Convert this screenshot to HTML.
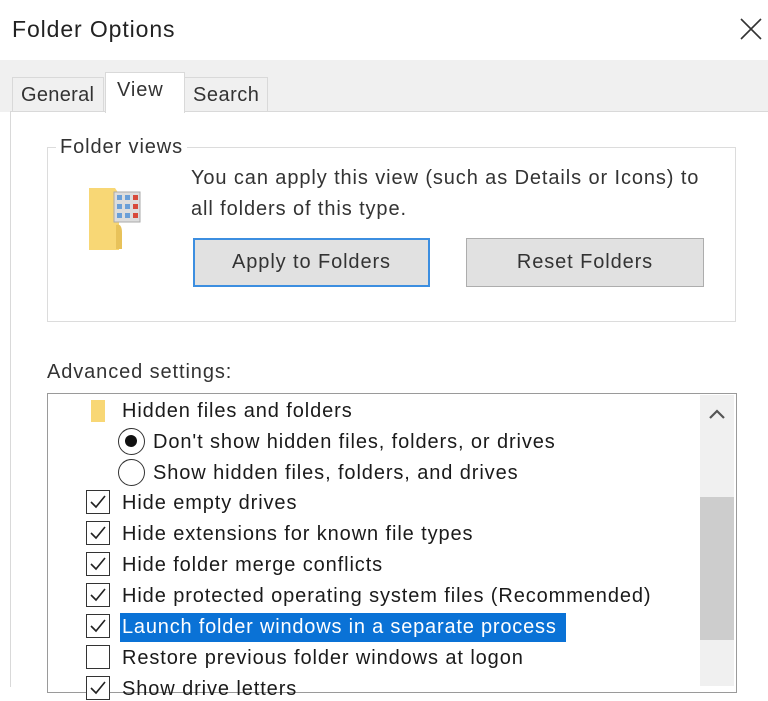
<!DOCTYPE html>
<html><head><style>
body{margin:0;width:768px;height:686px;overflow:hidden;background:#fff;font-family:"Liberation Sans",sans-serif;color:#1a1a1a;position:relative}
.a{position:absolute}
.t{font-size:20px;white-space:nowrap;letter-spacing:0.9px}
.cb{position:absolute;left:86px;width:22px;height:22px;border:1.5px solid #333;background:#fff}
.cb svg{position:absolute;left:2px;top:3px}
.rd{position:absolute;left:118px;width:27px;height:27px;border:1.5px solid #333;border-radius:50%;background:#fff;box-sizing:border-box}
</style></head><body>
<div class="a t" style="left:12px;top:16px;font-size:23px;color:#222">Folder Options</div>
<svg class="a" style="left:740px;top:18px" width="22" height="22"><path d="M1 1L21 21M21 1L1 21" stroke="#333" stroke-width="1.6"/></svg>
<div class="a" style="left:0;top:60px;width:768px;height:52px;background:#f0f0f0"></div>
<div class="a" style="left:10px;top:111px;width:758px;height:575px;background:#fff;border-top:1px solid #d9d9d9;border-left:1px solid #d9d9d9"></div>
<div class="a t" style="left:12px;top:77px;width:92px;height:34px;background:#f0f0f0;border:1px solid #d9d9d9;border-bottom:none;box-sizing:border-box;padding:6px 0 0 8px;color:#333;letter-spacing:0.3px">General</div>
<div class="a t" style="left:184px;top:77px;width:84px;height:34px;background:#f0f0f0;border:1px solid #d9d9d9;border-bottom:none;box-sizing:border-box;padding:6px 0 0 8px;color:#333;letter-spacing:0.5px">Search</div>
<div class="a t" style="left:105px;top:72px;width:80px;height:41px;background:#fff;border:1px solid #d9d9d9;border-bottom:none;box-sizing:border-box;padding:6px 0 0 11px;color:#333">View</div>
<div class="a" style="left:47px;top:147px;width:689px;height:175px;border:1px solid #dcdcdc;box-sizing:border-box"></div>
<div class="a t" style="left:56px;top:136px;background:#fff;padding:0 4px;color:#333">Folder views</div>
<svg class="a" style="left:86px;top:185px" width="60" height="66">
<path d="M3 3h26l4 6v56H3z" fill="#f8d775"/><path d="M30 40q6-2 6 8v16h-6z" fill="#e8c25a"/>
<rect x="28" y="7" width="26" height="30" fill="#ddd" stroke="#aaa"/>
<g fill="#6a9fd8"><rect x="31" y="10" width="5" height="5"/><rect x="39" y="10" width="5" height="5"/><rect x="31" y="19" width="5" height="5"/><rect x="39" y="19" width="5" height="5"/><rect x="31" y="28" width="5" height="5"/><rect x="39" y="28" width="5" height="5"/></g>
<g fill="#d84a3a"><rect x="47" y="10" width="5" height="5"/><rect x="47" y="19" width="5" height="5"/><rect x="47" y="28" width="5" height="5"/></g></svg>
<div class="a t" style="left:191px;top:163px;line-height:31px;color:#333">You can apply this view (such as Details or Icons) to<br>all folders of this type.</div>
<div class="a t" style="left:193px;top:238px;width:237px;height:49px;border:2px solid #3c8ee0;background:#e1e1e1;box-sizing:border-box;text-align:center;line-height:45px;color:#333">Apply to Folders</div>
<div class="a t" style="left:466px;top:238px;width:238px;height:49px;border:1px solid #adadad;background:#e1e1e1;box-sizing:border-box;text-align:center;line-height:47px;color:#333">Reset Folders</div>
<div class="a t" style="left:47px;top:361px;color:#333">Advanced settings:</div>
<div class="a" style="left:47px;top:393px;width:690px;height:300px;border:1px solid #9a9a9a;box-sizing:border-box"></div>
<div class="a" style="left:700px;top:395px;width:34px;height:291px;background:#f0f0f0"></div>
<div class="a" style="left:700px;top:497px;width:34px;height:143px;background:#cdcdcd"></div>
<svg class="a" style="left:708px;top:408px" width="18" height="12"><path d="M2 10L9 3L16 10" fill="none" stroke="#555" stroke-width="2.2"/></svg>
<div class="a" style="left:91px;top:400px;width:14px;height:22px;background:#f8d775"></div>
<div class="a t" style="left:122px;top:400px">Hidden files and folders</div>
<div class="rd" style="top:428px"><div class="a" style="left:6px;top:6px;width:12px;height:12px;border-radius:50%;background:#111"></div></div>
<div class="a t" style="left:153px;top:431px">Don't show hidden files, folders, or drives</div>
<div class="rd" style="top:459px"></div>
<div class="a t" style="left:153px;top:462px">Show hidden files, folders, and drives</div>
<div class="a" style="left:120px;top:613px;width:446px;height:29px;background:#0a72d6"></div>
<div class="cb" style="top:490px"><svg width="18" height="16"><path d="M2 8l5 5L16 2" fill="none" stroke="#222" stroke-width="1.6"/></svg></div>
<div class="a t" style="left:122px;top:492px">Hide empty drives</div>
<div class="cb" style="top:521px"><svg width="18" height="16"><path d="M2 8l5 5L16 2" fill="none" stroke="#222" stroke-width="1.6"/></svg></div>
<div class="a t" style="left:122px;top:523px">Hide extensions for known file types</div>
<div class="cb" style="top:552px"><svg width="18" height="16"><path d="M2 8l5 5L16 2" fill="none" stroke="#222" stroke-width="1.6"/></svg></div>
<div class="a t" style="left:122px;top:554px">Hide folder merge conflicts</div>
<div class="cb" style="top:583px"><svg width="18" height="16"><path d="M2 8l5 5L16 2" fill="none" stroke="#222" stroke-width="1.6"/></svg></div>
<div class="a t" style="left:122px;top:585px">Hide protected operating system files (Recommended)</div>
<div class="cb" style="top:614px"><svg width="18" height="16"><path d="M2 8l5 5L16 2" fill="none" stroke="#222" stroke-width="1.6"/></svg></div>
<div class="a t" style="left:122px;top:616px;color:#fff;letter-spacing:0.8px">Launch folder windows in a separate process</div>
<div class="cb" style="top:645px"></div>
<div class="a t" style="left:122px;top:647px">Restore previous folder windows at logon</div>
<div class="cb" style="top:676px"><svg width="18" height="16"><path d="M2 8l5 5L16 2" fill="none" stroke="#222" stroke-width="1.6"/></svg></div>
<div class="a t" style="left:122px;top:678px">Show drive letters</div>
</body></html>
